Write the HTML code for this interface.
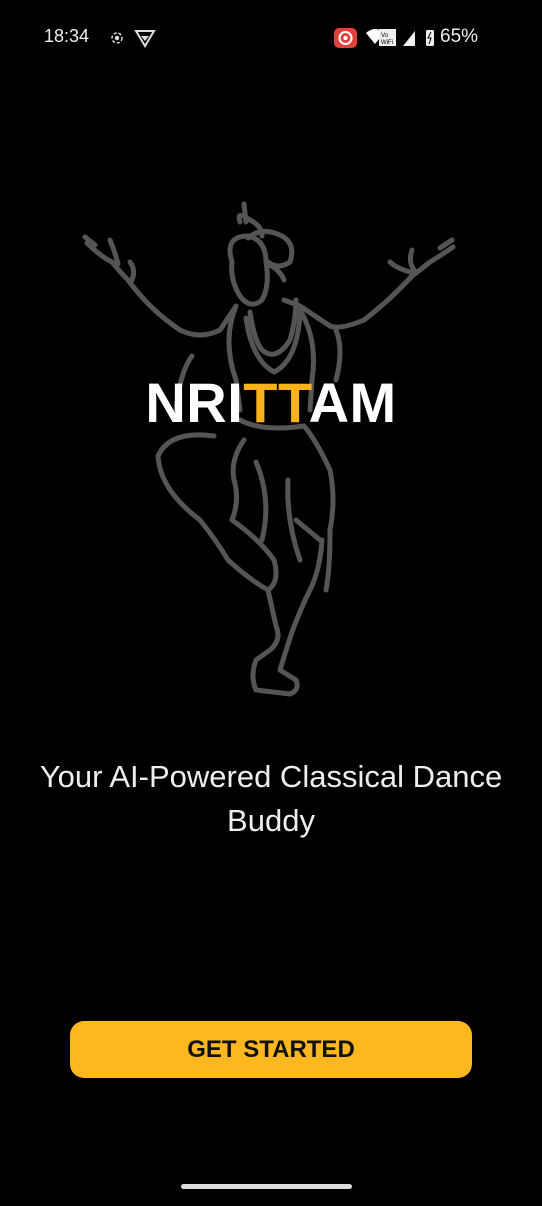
<!DOCTYPE html>
<html><head><meta charset="utf-8"><style>
body{margin:0;width:542px;height:1206px;background:#000;position:relative;overflow:hidden;font-family:"Liberation Sans",sans-serif;color:#fff}
.abs{position:absolute}
</style></head><body>
<div class="abs" style="left:44px;top:26px;font-size:18px;color:#eee">18:34</div>
<svg class="abs" style="left:0;top:0" width="542" height="80">
<circle cx="117" cy="38" r="5" fill="none" stroke="#ddd" stroke-width="1.5" stroke-dasharray="3 2"/><circle cx="117" cy="38" r="2.2" fill="#ddd"/>
<path d="M136 31 L154 31 L145 46 Z" fill="none" stroke="#ddd" stroke-width="2"/><path d="M141 36 L149 36 L145 41Z" fill="#ddd"/>
<rect x="334" y="28" width="23" height="20" rx="5" fill="#e0413a"/><circle cx="345.5" cy="38" r="6" fill="none" stroke="#fff" stroke-width="2"/><circle cx="345.5" cy="38" r="2.2" fill="#fff"/>
<path d="M366 33 Q375 25 384 33 L375 44 Z" fill="#fff"/>
<rect x="379" y="29" width="17" height="17" fill="#eee"/><text x="381" y="37" font-size="6" fill="#000" font-family="Liberation Sans">Vo</text><text x="381" y="44" font-size="6" fill="#000" font-family="Liberation Sans">WiFi</text>
<path d="M403 46 L415 31 L415 46Z" fill="#eee"/>
<rect x="426" y="30" width="8" height="16" rx="1.5" fill="#eee"/><path d="M431 32 L428 38 L431 38 L429 44" stroke="#000" stroke-width="1" fill="none"/>
</svg>
<div class="abs" style="left:440px;top:26px;font-size:19px;color:#eee">65%</div>

<svg class="abs" style="left:0;top:0" width="542" height="720" fill="none" stroke="#555" stroke-width="5" stroke-linecap="round" stroke-linejoin="round">
<path d="M244 204 L246 222 M240 222 Q236 210 250 220 Q262 226 262 236"/>
<path d="M232 262 Q224 236 248 236 Q266 240 266 262 Q270 286 262 300 Q250 310 240 296 Q230 280 232 262Z"/>
<path d="M248 238 Q262 226 282 236 Q296 244 290 262 Q278 270 268 262"/>
<path d="M268 264 Q280 270 284 280"/>
<path d="M87 243 Q100 256 112 262 Q120 272 128 280 Q150 310 180 330 Q200 340 220 330 L236 306"/>
<path d="M85 237 L95 245 M110 240 Q115 252 118 264 M130 262 Q136 270 132 280"/>
<path d="M453 247 Q440 256 430 262 Q420 270 412 276 Q390 300 364 320 Q340 330 330 326 L300 306 L284 300"/>
<path d="M452 240 L440 248 M412 250 Q408 262 414 270"/>
<path d="M390 262 Q396 268 410 272"/>
<path d="M250 312 Q254 340 262 350 Q276 362 290 340 Q296 320 296 300"/>
<path d="M246 318 Q252 360 274 372 Q298 360 300 312"/>
<path d="M236 306 Q222 340 236 380 L240 410 M300 310 Q318 340 312 380 L310 410"/>
<path d="M192 356 Q180 372 176 410 M336 330 Q344 350 336 380"/>
<path d="M240 420 Q262 432 304 426 Q316 440 330 470 Q336 500 330 530 Q330 570 326 590"/>
<path d="M214 436 Q170 430 158 456 Q160 490 200 520 Q216 540 228 560 Q250 580 268 590 Q280 582 274 560 Q260 540 232 520 Q240 500 234 480 Q230 460 244 440"/>
<path d="M256 462 Q272 500 262 540 M288 480 Q286 520 300 560"/>
<path d="M268 590 L276 626 Q282 640 270 650 L256 660 Q250 676 256 690 L290 694 Q300 690 296 680 L280 670 Q286 650 292 632 Q300 610 310 590 Q320 570 322 540"/>
<path d="M296 520 L320 540"/>
</svg>

<div class="abs" style="left:0;width:542px;top:370px;text-align:center;font-size:56px;font-weight:bold;letter-spacing:0.5px">NRI<span style="color:#f7b21c">TT</span>AM</div>

<div class="abs" style="left:0;width:542px;top:755px;text-align:center;font-size:31px;line-height:44px;color:#eee">Your AI-Powered Classical Dance<br>Buddy</div>

<div class="abs" style="left:70px;top:1021px;width:402px;height:57px;border-radius:14px;background:#fdb71f;color:#111;font-weight:bold;font-size:24px;text-align:center;line-height:57px">GET STARTED</div>

<div class="abs" style="left:181px;top:1184px;width:171px;height:5px;border-radius:3px;background:#ddd"></div>
</body></html>
